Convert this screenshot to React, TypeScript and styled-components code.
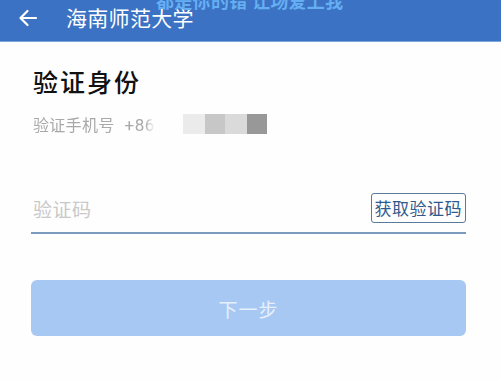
import React from 'react';
import styled, {createGlobalStyle} from 'styled-components';

const Global = createGlobalStyle`
  html, body {
    margin: 0;
    padding: 0;
    background: #ffffff;
  }
  body {
    font-family: "Noto Sans CJK SC", "Noto Sans", sans-serif;
    width: 501px;
    height: 381px;
    overflow: hidden;
  }
`;

const Page = styled.div`
  position: relative;
  width: 501px;
  height: 381px;
  overflow: hidden;
  background: #fefefe;
`;

const Header = styled.header`
  height: 42px;
  background: #3b72c3;
  border-bottom: 1px solid #7ea6dc;
  display: flex;
  align-items: center;
  padding: 0 0 6px 14px;
  box-sizing: border-box;
  gap: 24px;
  color: #ffffff;
`;

const BackButton = styled.div`
  width: 28px;
  height: 28px;
  display: flex;
  align-items: center;
  justify-content: center;
`;

const HeaderTitle = styled.div`
  font-size: 21px;
  line-height: 1;
  letter-spacing: 0.3px;
`;

const Toast = styled.div`
  position: absolute;
  top: -13px;
  left: 156px;
  font-size: 18px;
  font-weight: 700;
  color: #66aef2;
  white-space: nowrap;
  letter-spacing: 0.3px;
`;

const Body = styled.main`
  padding: 22px 35px 0 31px;
  display: flex;
  flex-direction: column;
`;

const Title = styled.h1`
  margin: 0 0 0 2px;
  font-size: 25px;
  font-weight: 500;
  color: #111111;
  line-height: 34px;
  letter-spacing: 2px;
`;

const PhoneRow = styled.div`
  margin: 14px 0 0 2px;
  display: flex;
  align-items: center;
  height: 24px;
`;

const PhoneLabel = styled.span`
  font-size: 16px;
  color: #a9a9a9;
  width: 124px;
  overflow: hidden;
  white-space: nowrap;
  letter-spacing: 0.3px;
  mask-image: linear-gradient(to right, #000 112px, transparent 122px);
`;

const CountryCode = styled.span`
  margin-left: 10px;
  font-family: "Roboto", "Noto Sans", sans-serif;
  font-size: 17px;
  letter-spacing: 0.5px;
`;

const Mosaic = styled.div`
  margin-left: 26px;
  display: flex;
  height: 20px;
`;

const Tile = styled.div<{$c: string; $w: number}>`
  width: ${p => p.$w}px;
  background: ${p => p.$c};
`;

const CodeRow = styled.div`
  margin-top: 52px;
  height: 40px;
  display: flex;
  align-items: center;
  justify-content: space-between;
  border-bottom: 2px solid #7b9bbe;
  padding: 0 0 4px 2px;
`;

const Placeholder = styled.span`
  font-size: 19px;
  color: #c9c9c9;
  letter-spacing: 0.5px;
`;

const GetCode = styled.div`
  border: 1.5px solid #5a7a9b;
  border-radius: 3px;
  padding: 3px 3px;
  font-size: 17px;
  line-height: 22px;
  color: #2f5a8c;
  letter-spacing: 0.5px;
`;

const NextButton = styled.div`
  margin-top: 46px;
  height: 56px;
  border-radius: 6px;
  background: #a8c8f4;
  color: #e6f0fd;
  font-size: 19px;
  display: flex;
  align-items: center;
  justify-content: center;
  letter-spacing: 1px;
`;

export default () => {
  const tiles = [
    {c: '#ebebeb', w: 22},
    {c: '#c7c7c7', w: 20},
    {c: '#dadada', w: 22},
    {c: '#989898', w: 20},
  ];

  return <Page>
    <Global/>
    <Header>
      <BackButton>
        <svg width="20" height="18" viewBox="0 0 20 18" fill="none" stroke="#ffffff" strokeWidth="2.2" strokeLinecap="round" strokeLinejoin="round">
          <path d="M18 9H3"/>
          <path d="M9.5 2L2.5 9l7 7"/>
        </svg>
      </BackButton>
      <HeaderTitle>海南师范大学</HeaderTitle>
    </Header>
    <Toast>都是你的错 让场爱上我</Toast>
    <Body>
      <Title>验证身份</Title>
      <PhoneRow>
        <PhoneLabel>验证手机号<CountryCode>+86</CountryCode></PhoneLabel>
        <Mosaic>
          {tiles.map((t, i) => <Tile key={i} $c={t.c} $w={t.w}/>)}
        </Mosaic>
      </PhoneRow>
      <CodeRow>
        <Placeholder>验证码</Placeholder>
        <GetCode>获取验证码</GetCode>
      </CodeRow>
      <NextButton>下一步</NextButton>
    </Body>
  </Page>;
};
